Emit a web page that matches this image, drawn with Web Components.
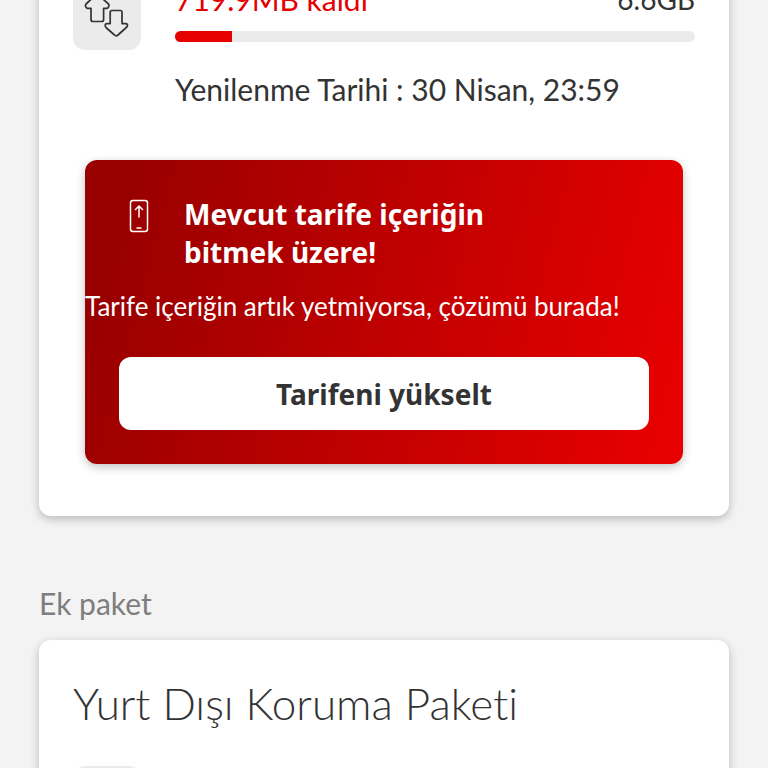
<!DOCTYPE html>
<html lang="tr">
<head>
<meta charset="utf-8">
<meta name="viewport" content="width=device-width, initial-scale=1">
<title>Paketlerim</title>
<style>
  body { margin: 0; background: #f3f3f3; }
</style>
</head>
<body>
<packages-page>
  <info-card>
    <usage-row value="11" max="100">
      <transfer-icon slot="icon"></transfer-icon>
      <span slot="left">719.9MB kaldı</span>
      <span slot="total">6.6GB</span>
      <span slot="note">Yenilenme Tarihi : 30 Nisan, 23:59</span>
    </usage-row>
    <upgrade-promo>
      <span slot="title">Mevcut tarife içeriğin bitmek üzere!</span>
      <span slot="text">Tarife içeriğin artık yetmiyorsa, çözümü burada!</span>
      <span slot="action">Tarifeni yükselt</span>
    </upgrade-promo>
  </info-card>
  <section-title>Ek paket</section-title>
  <info-card>
    <card-title>Yurt Dışı Koruma Paketi</card-title>
    <icon-tile></icon-tile>
  </info-card>
</packages-page>

<script>
const define = (name, html, setup) => {
  const template = document.createElement('template');
  template.innerHTML = html;
  customElements.define(name, class extends HTMLElement {
    constructor() {
      super();
      this.attachShadow({ mode: 'open' }).append(template.content.cloneNode(true));
    }
    connectedCallback() { if (setup) setup(this, this.shadowRoot); }
  });
};

// Viewport scrolled part-way down the list: the column starts above the window.
define('packages-page', `
  <style>
    :host {
      display: block; box-sizing: border-box; height: 100vh; overflow: hidden;
      padding: 0 39px; background: #f3f3f3; color: #333;
      font-family: Lato, "Noto Sans", "Liberation Sans", sans-serif;
      font-size: 30px; line-height: 40px; font-variant-ligatures: none;
    }
    main { display: flex; flex-direction: column; margin-top: -40px; }
  </style>
  <main><slot></slot></main>`);

define('info-card', `
  <style>
    :host {
      display: flex; flex-direction: column; padding: 22px 34px 52px;
      background: #fff; border-radius: 12px; box-shadow: 0 3px 10px rgba(0,0,0,.24);
    }
  </style>
  <slot></slot>`);

define('icon-tile', `
  <style>
    :host {
      display: flex; align-items: center; justify-content: center;
      width: 68px; height: 68px; border-radius: 12px; background: #ebebeb;
    }
  </style>
  <slot></slot>`);

define('transfer-icon', `
  <style>:host { display: block; } svg { display: block; }</style>
  <svg width="46" height="46" viewBox="0 0 46 46" fill="none" stroke="#333" stroke-width="1.700" stroke-linejoin="round" aria-hidden="true">
    <path d="M14.300 1.800 L24.500 11 Q25.500 12.300 24.500 14 L23.500 15.300 H19.600 V26.500 Q19.600 28.500 17.600 28.500 H9 Q7 28.500 7 26.500 V15.300 H3 L1.900 14 Q1 12.300 2 11 L12 1.800 Q13.200 1 14.300 1.800 Z"/>
    <path d="M28 17.500 H36.500 Q38 17.500 38 19 V30.600 H42 Q43.200 30.600 43.500 31.800 Q43.600 33.500 42.300 34.500 L34 42 Q32.200 43.600 30.500 42 L22.500 35 Q21 33.500 21.200 31.800 Q21.500 30.600 22.800 30.600 H26.200 V19.500 Q26.200 17.500 28 17.500 Z"/>
  </svg>`);

define('usage-row', `
  <style>
    :host { display: flex; gap: 34px; align-items: flex-start; }
    .info { flex: 1; display: flex; flex-direction: column; }
    .amounts { display: flex; justify-content: space-between; line-height: 34px; }
    .left { color: #e60000; }
    .total { font-size: 28px; }
    progress {
      appearance: none; -webkit-appearance: none; display: block; width: 100%; height: 11px;
      margin: 15px 0 27px; border: 0; border-radius: 6px; overflow: hidden; background: #ebebeb;
    }
    progress::-webkit-progress-bar { background: #ebebeb; }
    progress::-webkit-progress-value { background: #e60000; }
  </style>
  <icon-tile><slot name="icon"></slot></icon-tile>
  <div class="info">
    <div class="amounts">
      <span class="left" id="left"><slot name="left"></slot></span>
      <span class="total"><slot name="total"></slot></span>
    </div>
    <progress aria-labelledby="left"></progress>
    <div><slot name="note"></slot></div>
  </div>`, (host, root) => {
    const bar = root.querySelector('progress');
    bar.max = Number(host.getAttribute('max'));
    bar.value = Number(host.getAttribute('value'));
  });

define('upgrade-promo', `
  <style>
    :host {
      display: flex; flex-direction: column; margin: 51px 12px 0; padding: 35px 0 34px;
      border-radius: 12px; color: #fff; box-shadow: 0 3px 10px rgba(0,0,0,.24);
      background: linear-gradient(105deg, #900 7%, #e60000 95%);
    }
    .head { display: flex; align-items: flex-start; padding: 0 34px; }
    .icon { display: flex; justify-content: center; width: 40px; margin: 4px 25px 0 0; }
    h2 {
      margin: 0; max-width: 340px; font: 700 28px/38px "Noto Sans", "Open Sans", sans-serif;
    }
    p { margin: 15px 0 31px; font-size: 26px; line-height: 40px; }
    button {
      margin: 0 34px; padding: 17px 17px 16px; border: 0; border-radius: 12px; background: #fff; color: #333;
      font: 700 28px/40px "Noto Sans", "Open Sans", sans-serif; cursor: pointer;
    }
  </style>
  <div class="head">
    <span class="icon">
      <svg width="20" height="34" viewBox="0 0 20 34" fill="none" stroke="#fff" stroke-width="1.500" stroke-linecap="round" stroke-linejoin="round" aria-hidden="true">
        <rect x="1.500" y="1.500" width="17" height="31" rx="2.500"/>
        <path d="M10 18 V7 M6.500 10.500 L10 7 L13.500 10.500 M8 29 H12"/>
      </svg>
    </span>
    <h2><slot name="title"></slot></h2>
  </div>
  <p><slot name="text"></slot></p>
  <button type="button"><slot name="action"></slot></button>`);

define('section-title', `
  <style>
    :host { display: block; margin: 67px 0 17px; color: #7e7e7e; }
    h2 { margin: 0; font: inherit; }
  </style>
  <h2><slot></slot></h2>`);

define('card-title', `
  <style>
    :host { display: block; margin: 13px 0 35px; }
    h3 { margin: 0; font-size: 44px; line-height: 56px; font-weight: 300; }
  </style>
  <h3><slot></slot></h3>`);
</script>
</body>
</html>
